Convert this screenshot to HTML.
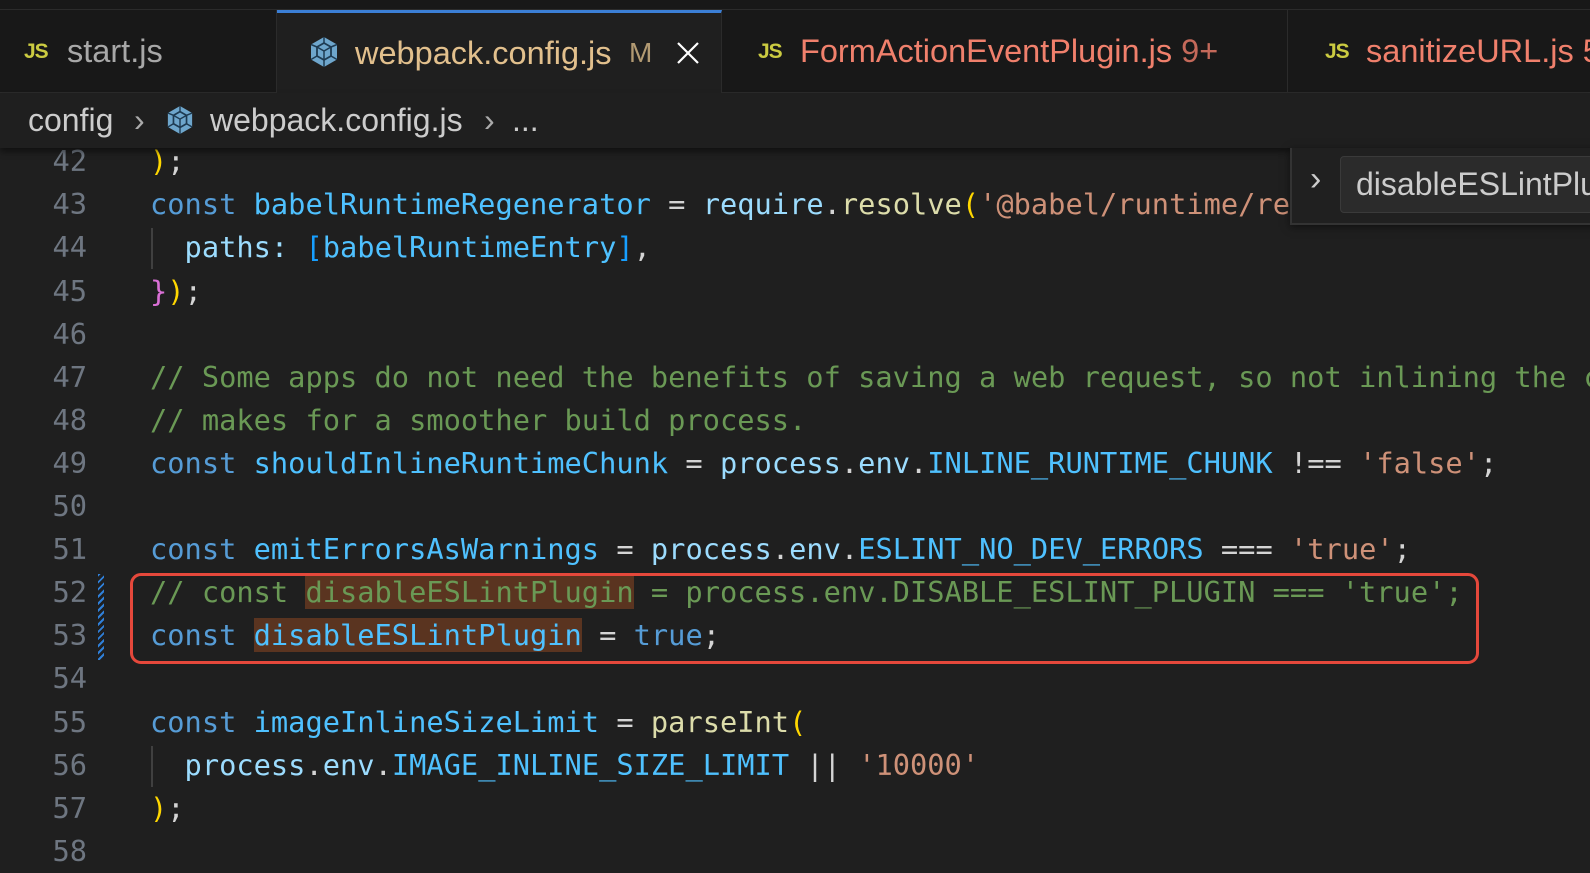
<!DOCTYPE html>
<html><head><meta charset="utf-8"><style>
*{margin:0;padding:0;box-sizing:border-box}
body{width:1590px;height:864px;background:#1f1f1f;overflow:hidden;position:relative;font-family:"Liberation Sans",sans-serif}
.top{position:absolute;left:0;top:0;width:1590px;height:10px;background:#181818;border-bottom:1px solid #2b2b2b}
.tabs{position:absolute;left:0;top:10px;width:1590px;height:83px;background:#181818;border-bottom:1px solid #2b2b2b}
.tab{position:absolute;top:0;height:83px;border-right:1px solid #2b2b2b;font-size:32.5px;line-height:83px;white-space:nowrap;overflow:hidden}
.tab.active{background:#1f1f1f;border-top:3px solid #3b7fd6;line-height:80px;height:84px}
.js{position:absolute;font-weight:bold;color:#cbcb41;font-size:21px;letter-spacing:-1px}
.crumb{position:absolute;left:0;top:93px;width:1590px;height:55px;background:#1f1f1f;font-size:32px;color:#cccccc;line-height:55px;box-shadow:0 4px 6px rgba(0,0,0,.45);z-index:2}
.code{font-family:"DejaVu Sans Mono","Liberation Mono",monospace;font-size:28.7px;white-space:pre}
.ln{position:absolute;left:0;width:87px;text-align:right;color:#6e7681;height:43px;line-height:43px}
.l{position:absolute;left:150px;height:43px;line-height:43px;color:#d4d4d4}
.k{color:#569cd6}.v{color:#9cdcfe}.c{color:#4fc1ff}.f{color:#dcdcaa}.s{color:#ce9178}.m{color:#6a9955}.y{color:#ffd700}.p{color:#da70d6}.b{color:#179fff}
.hl{background:#5a3420}
</style></head><body>
<div class="top"></div>
<div class="tabs">
 <div class="tab" style="left:0;width:277px"><span class="js" style="left:24px">JS</span><span style="position:absolute;left:67px;color:#a8a8a8">start.js</span></div>
 <div class="tab active" style="left:277px;width:445px">
  <svg style="position:absolute;left:32px;top:23px" width="30" height="32" viewBox="0 0 30 32"><polygon points="15,1 28,8.5 28,23.5 15,31 2,23.5 2,8.5" fill="#6ea6cc"/><polygon points="15,7 22,11 22,20 15,24 8,20 8,11" fill="none" stroke="#1e3b52" stroke-width="1.8"/><path d="M8 11 L15 15 L22 11 M15 15 V24 M2 8.5 L8 11 M28 8.5 L22 11 M15 1 V7 M2 23.5 L8 20 M28 23.5 L22 20 M15 31 V24" stroke="#1e3b52" stroke-width="1.5" fill="none"/></svg>
  <span style="position:absolute;left:78px;color:#e2c08d">webpack.config.js</span>
  <span style="position:absolute;left:352px;color:#b29a72;font-size:28px">M</span>
  <svg style="position:absolute;left:400px;top:29px" width="22" height="22" viewBox="0 0 22 22"><path d="M1 1 L21 21 M21 1 L1 21" stroke="#fff" stroke-width="2.2"/></svg></div>
 <div class="tab" style="left:722px;width:566px"><span class="js" style="left:36px">JS</span><span style="position:absolute;left:78px;color:#f0806c">FormActionEventPlugin.js <span style="color:#c4695a">9+</span></span></div>
 <div class="tab" style="left:1288px;width:330px;border-right:none"><span class="js" style="left:37px">JS</span><span style="position:absolute;left:78px;color:#f0806c">sanitizeURL.js 5</span></div>
</div>
<div class="crumb">
 <span style="position:absolute;left:28px">config</span>
 <span style="position:absolute;left:134px;color:#aaa">›</span>
 <svg style="position:absolute;left:166px;top:12px" width="28" height="30" viewBox="0 0 30 32"><polygon points="15,1 28,8.5 28,23.5 15,31 2,23.5 2,8.5" fill="#6ea6cc"/><polygon points="15,7 22,11 22,20 15,24 8,20 8,11" fill="none" stroke="#1e3b52" stroke-width="1.8"/><path d="M8 11 L15 15 L22 11 M15 15 V24 M2 8.5 L8 11 M28 8.5 L22 11 M15 1 V7 M2 23.5 L8 20 M28 23.5 L22 20 M15 31 V24" stroke="#1e3b52" stroke-width="1.5" fill="none"/></svg>
 <span style="position:absolute;left:210px">webpack.config.js</span>
 <span style="position:absolute;left:484px;color:#aaa">›</span>
 <span style="position:absolute;left:512px">...</span>
</div>

<div class="code">
<div class="ln" style="top:140px">42</div><div class="l" style="top:140px"><span class="y">)</span>;</div>
<div class="ln" style="top:183px">43</div><div class="l" style="top:183px"><span class="k">const</span> <span class="c">babelRuntimeRegenerator</span> = <span class="v">require</span>.<span class="f">resolve</span><span class="y">(</span><span class="s">'@babel/runtime/re</span></div>
<div class="ln" style="top:226px">44</div><div class="l" style="top:226px">  <span class="v">paths</span><span class="v">:</span> <span class="b">[</span><span class="c">babelRuntimeEntry</span><span class="b">]</span>,</div>
<div class="ln" style="top:270px">45</div><div class="l" style="top:270px"><span class="p">}</span><span class="y">)</span>;</div>
<div class="ln" style="top:313px">46</div>
<div class="ln" style="top:356px">47</div><div class="l m" style="top:356px">// Some apps do not need the benefits of saving a web request, so not inlining the c</div>
<div class="ln" style="top:399px">48</div><div class="l m" style="top:399px">// makes for a smoother build process.</div>
<div class="ln" style="top:442px">49</div><div class="l" style="top:442px"><span class="k">const</span> <span class="c">shouldInlineRuntimeChunk</span> = <span class="v">process</span>.<span class="v">env</span>.<span class="c">INLINE_RUNTIME_CHUNK</span> !== <span class="s">'false'</span>;</div>
<div class="ln" style="top:485px">50</div>
<div class="ln" style="top:528px">51</div><div class="l" style="top:528px"><span class="k">const</span> <span class="c">emitErrorsAsWarnings</span> = <span class="v">process</span>.<span class="v">env</span>.<span class="c">ESLINT_NO_DEV_ERRORS</span> === <span class="s">'true'</span>;</div>
<div class="ln" style="top:571px">52</div><div class="l m" style="top:571px">// const <span class="hl">disableESLintPlugin</span> = process.env.DISABLE_ESLINT_PLUGIN === 'true';</div>
<div class="ln" style="top:614px">53</div><div class="l" style="top:614px"><span class="k">const</span> <span class="hl c">disableESLintPlugin</span> = <span class="k">true</span>;</div>
<div class="ln" style="top:657px">54</div>
<div class="ln" style="top:701px">55</div><div class="l" style="top:701px"><span class="k">const</span> <span class="c">imageInlineSizeLimit</span> = <span class="f">parseInt</span><span class="y">(</span></div>
<div class="ln" style="top:744px">56</div><div class="l" style="top:744px">  <span class="v">process</span>.<span class="v">env</span>.<span class="c">IMAGE_INLINE_SIZE_LIMIT</span> || <span class="s">'10000'</span></div>
<div class="ln" style="top:787px">57</div><div class="l" style="top:787px"><span class="y">)</span>;</div>
<div class="ln" style="top:830px">58</div>
</div>
<div style="position:absolute;left:151px;top:228px;width:2px;height:41px;background:#404040"></div>
<div style="position:absolute;left:151px;top:746px;width:2px;height:41px;background:#404040"></div>
<div style="position:absolute;left:98px;top:574px;width:6px;height:86px;background:repeating-linear-gradient(135deg,#2f7fd8 0 2px,transparent 2px 5px)"></div>
<div style="position:absolute;left:130px;top:573px;width:1349px;height:91px;border:3px solid #e5483b;border-radius:11px"></div>
<div style="position:absolute;left:1290px;top:148px;width:310px;height:77px;background:#202020;border-left:2px solid #333;border-bottom:2px solid #333;box-shadow:0 2px 8px rgba(0,0,0,.5);z-index:3">
 <span style="position:absolute;left:18px;top:12px;color:#ccc;font-size:34px">›</span>
 <div style="position:absolute;left:48px;top:8px;width:300px;height:57px;background:#2b2b2b;border:1px solid #3a3a3a;border-radius:4px;color:#cccccc;font-size:32px;line-height:55px;padding-left:15px;white-space:nowrap;overflow:hidden">disableESLintPlugin</div>
</div>
</body></html>
